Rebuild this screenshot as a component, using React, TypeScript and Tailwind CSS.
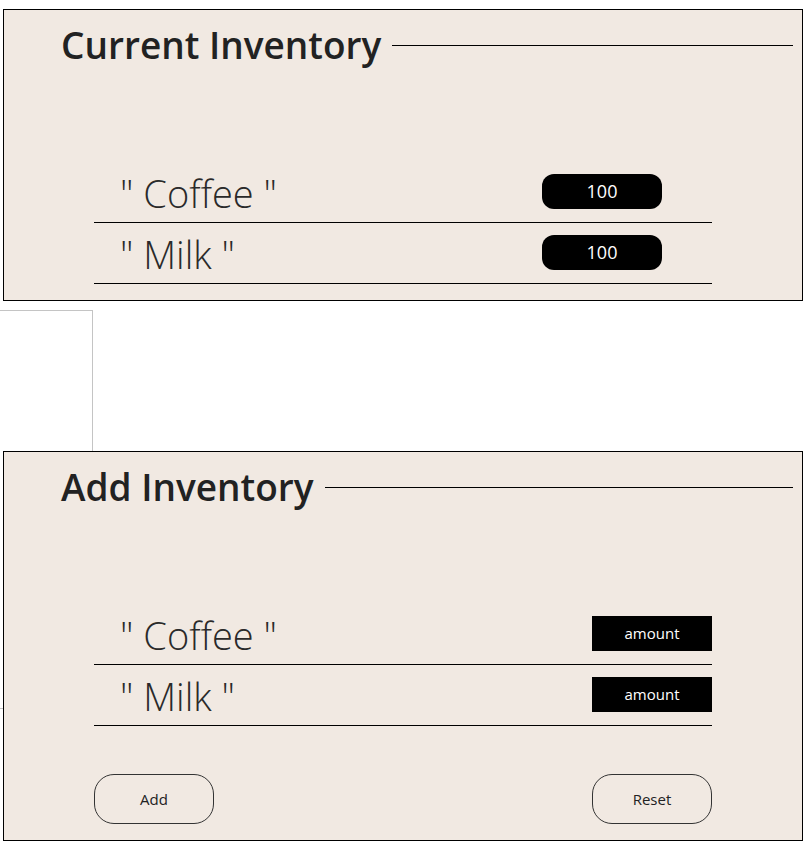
const items = ["Coffee", "Milk"];

function Heading({ title }: { title: string }) {
  return (
    <div className="flex h-[70px] items-center pl-[57px]">
      <h2 className="-mt-[2px] text-[37px] font-semibold leading-none text-[#222]">{title}</h2>
      <div className="ml-[11px] mr-[9px] h-px flex-1 bg-black" />
    </div>
  );
}

export default function App() {
  return (
    <div
      className="min-h-screen bg-white pl-[3px] pt-[9px]"
      style={{ fontFamily: '"Segoe UI", "Open Sans", sans-serif' }}
    >
      {/* Current inventory */}
      <section className="h-[292px] w-[800px] border border-black bg-[#f1e9e2]">
        <Heading title="Current Inventory" />
        <div className="ml-[90px] mt-[82px] w-[618px]">
          {items.map((name) => (
            <div key={name} className="flex h-[61px] items-center justify-between border-b border-black">
              <span className="pl-[26px] pt-[2px] text-[38px] font-light leading-none text-[#2a2a2a]">
                " {name} "
              </span>
              <span className="mb-[2px] mr-[50px] flex h-[35px] w-[120px] items-center justify-center rounded-[12px] bg-black text-[18px] font-medium text-white">
                100
              </span>
            </div>
          ))}
        </div>
      </section>

      {/* empty frame behind the second panel */}
      <div className="-ml-[3px] mt-[9px] h-[399px] w-[93px] border border-l-0 border-[#c4c4c4]" />

      {/* Add inventory */}
      <section className="relative -mt-[258px] h-[390px] w-[800px] border border-black bg-[#f1e9e2]">
        <Heading title="Add Inventory" />
        <div className="ml-[90px] mt-[82px] w-[618px]">
          {items.map((name) => (
            <div key={name} className="flex h-[61px] items-center justify-between border-b border-black">
              <span className="pl-[26px] pt-[2px] text-[38px] font-light leading-none text-[#2a2a2a]">
                " {name} "
              </span>
              <input
                placeholder="amount"
                className="mb-[2px] h-[35px] w-[120px] bg-black text-center text-[15px] text-white outline-none placeholder:text-white"
              />
            </div>
          ))}
          <div className="mt-[48px] flex justify-between">
            <button className="h-[50px] w-[120px] rounded-[20px] border border-[#333] text-[15px] text-[#222]">
              Add
            </button>
            <button className="h-[50px] w-[120px] rounded-[20px] border border-[#333] text-[15px] text-[#222]">
              Reset
            </button>
          </div>
        </div>
      </section>
    </div>
  );
}
